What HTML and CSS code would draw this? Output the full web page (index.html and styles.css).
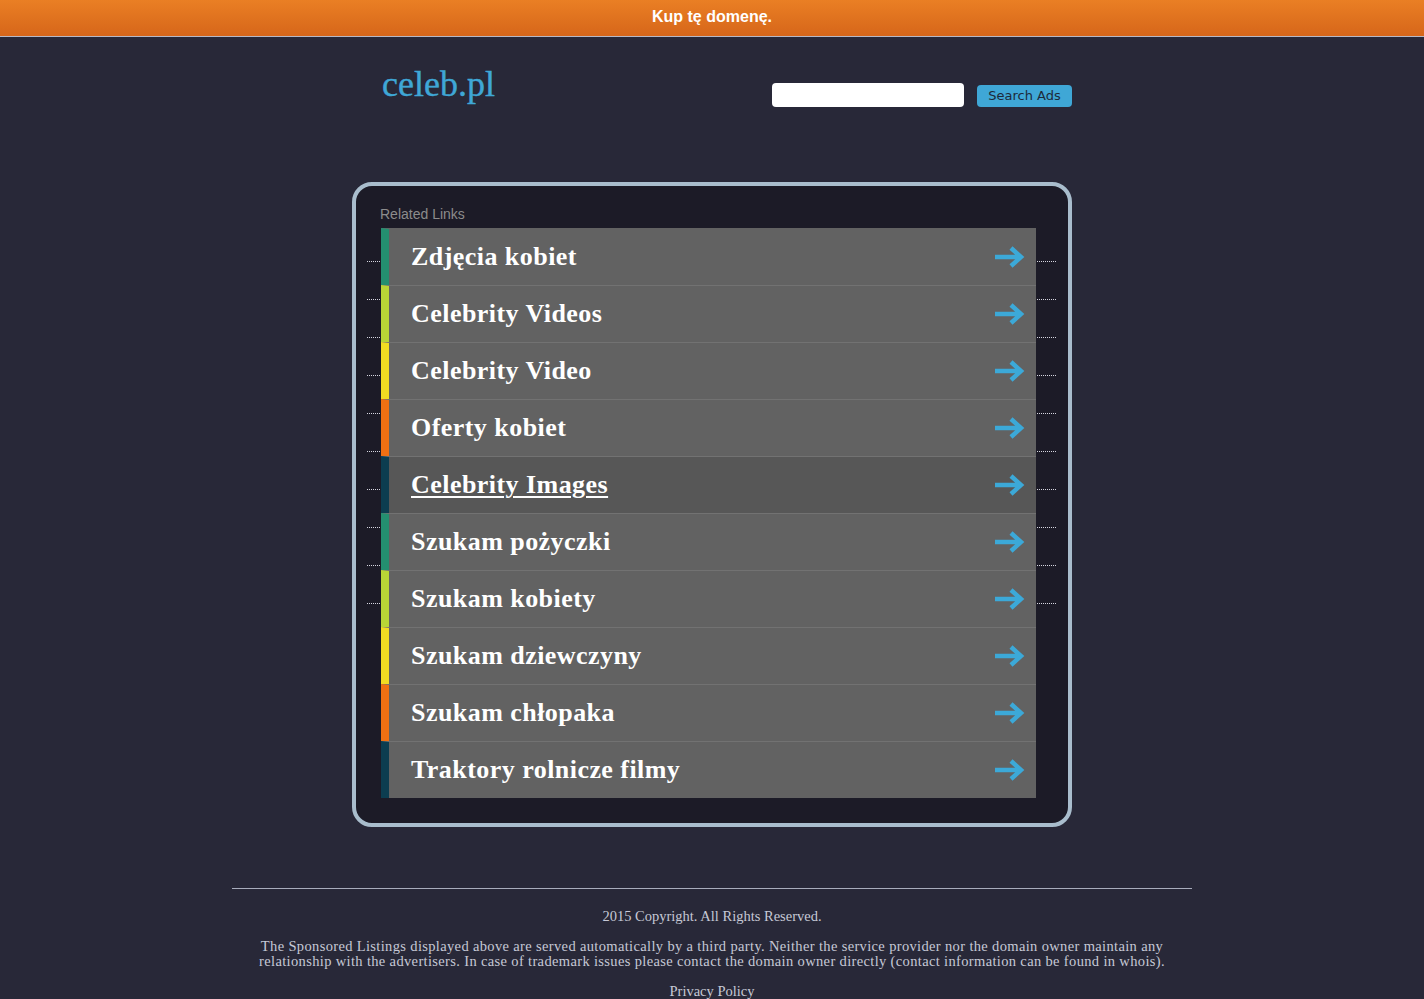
FILE: index.html
```html
<!DOCTYPE html>
<html lang="pl">
<head>
<meta charset="utf-8">
<title>celeb.pl</title>
<link rel="stylesheet" href="styles.css">
</head>
<body>
<div class="topbar"><a class="buy" href="#">Kup tę domenę.</a></div>

<div class="wrap">
  <header class="header">
    <div class="logo">celeb.pl</div>
    <form class="search">
      <input class="search-input" type="text">
      <button class="search-btn" type="button">Search Ads</button>
    </form>
  </header>

  <section class="box">
    <div class="box-title">Related Links</div>
    <div class="list-area">
      <div class="dots">
        <div class="dot-line"></div><div class="dot-line"></div><div class="dot-line"></div><div class="dot-line"></div><div class="dot-line"></div>
        <div class="dot-line"></div><div class="dot-line"></div><div class="dot-line"></div><div class="dot-line"></div><div class="dot-line"></div>
      </div>
      <ul class="links">
        <li class="link c1"><a href="#">Zdjęcia kobiet</a><svg class="arrow" viewBox="0 0 30 22"><path d="M0 11H26M16 2L26 11L16 20" /></svg></li>
        <li class="link c2"><a href="#">Celebrity Videos</a><svg class="arrow" viewBox="0 0 30 22"><path d="M0 11H26M16 2L26 11L16 20" /></svg></li>
        <li class="link c3"><a href="#">Celebrity Video</a><svg class="arrow" viewBox="0 0 30 22"><path d="M0 11H26M16 2L26 11L16 20" /></svg></li>
        <li class="link c4"><a href="#">Oferty kobiet</a><svg class="arrow" viewBox="0 0 30 22"><path d="M0 11H26M16 2L26 11L16 20" /></svg></li>
        <li class="link c5 hover"><a href="#">Celebrity Images</a><svg class="arrow" viewBox="0 0 30 22"><path d="M0 11H26M16 2L26 11L16 20" /></svg></li>
        <li class="link c1"><a href="#">Szukam pożyczki</a><svg class="arrow" viewBox="0 0 30 22"><path d="M0 11H26M16 2L26 11L16 20" /></svg></li>
        <li class="link c2"><a href="#">Szukam kobiety</a><svg class="arrow" viewBox="0 0 30 22"><path d="M0 11H26M16 2L26 11L16 20" /></svg></li>
        <li class="link c3"><a href="#">Szukam dziewczyny</a><svg class="arrow" viewBox="0 0 30 22"><path d="M0 11H26M16 2L26 11L16 20" /></svg></li>
        <li class="link c4"><a href="#">Szukam chłopaka</a><svg class="arrow" viewBox="0 0 30 22"><path d="M0 11H26M16 2L26 11L16 20" /></svg></li>
        <li class="link c5"><a href="#">Traktory rolnicze filmy</a><svg class="arrow" viewBox="0 0 30 22"><path d="M0 11H26M16 2L26 11L16 20" /></svg></li>
      </ul>
    </div>
  </section>
</div>

<footer class="footer">
  <p class="copy">2015 Copyright. All Rights Reserved.</p>
  <p class="disclaimer">The Sponsored Listings displayed above are served automatically by a third party. Neither the service provider nor the domain owner maintain any relationship with the advertisers. In case of trademark issues please contact the domain owner directly (contact information can be found in whois).</p>
  <p class="privacy"><a href="#">Privacy Policy</a></p>
</footer>
</body>
</html>
```
FILE: styles.css
```css
* { box-sizing: border-box; }
html, body { margin: 0; padding: 0; }
body {
  background: #282838;
  font-family: "Liberation Serif", "Times New Roman", serif;
  color: #c6c8d6;
}
.topbar {
  height: 37px;
  background: linear-gradient(#ea7f24, #d6661a);
  border-bottom: 1px solid #b9b9c4;
  display: flex;
  justify-content: center;
  align-items: center;
  padding-bottom: 3px;
}
.buy {
  font-family: "Liberation Sans", Arial, sans-serif;
  font-weight: bold;
  font-size: 16px;
  color: #fff;
  text-decoration: none;
}
.wrap {
  width: 720px;
  margin: 0 auto;
}
.header {
  display: flex;
  justify-content: space-between;
  align-items: flex-start;
  padding: 30px 0 0 30px;
  height: 145px;
}
.logo {
  font-size: 36px;
  color: #3fa7d6;
  font-weight: normal;
  line-height: 34px;
  -webkit-text-stroke: 0.4px #3fa7d6;
}
.search {
  display: flex;
  align-items: center;
  gap: 13px;
  margin-top: 16px;
  margin-right: 0;
}
.search-input {
  width: 192px;
  height: 24px;
  border: none;
  border-radius: 4px;
  background: #fff;
}
.search-btn {
  width: 95px;
  height: 22px;
  margin-top: 1px;
  border: none;
  border-radius: 4px;
  background: #3fa7d6;
  color: #1d2a3a;
  font-family: "DejaVu Sans", sans-serif;
  font-size: 13px;
  padding: 0;
}
.box {
  border: 4px solid #a9bdcd;
  border-radius: 20px;
  background: #1c1b27;
  padding: 20px 32px 25px 24px;
}
.box-title {
  font-family: "Liberation Sans", Arial, sans-serif;
  font-size: 14px;
  color: #8c8c8c;
  height: 22px;
  line-height: 16px;
}
.list-area {
  position: relative;
  margin-left: 1px;
}
.dots {
  position: absolute;
  top: 33px;
  left: -14px;
  right: -20px;
}
.dot-line {
  height: 38px;
  border-top: 1px dotted #d6d6e0;
}
.links {
  position: relative;
  list-style: none;
  margin: 0;
  padding: 0;
}
.link {
  height: 57px;
  background: #626262;
  border-left: 8px solid #2a9073;
  border-top: 1px solid #727272;
  display: flex;
  align-items: center;
  justify-content: space-between;
  padding: 0 11px 0 22px;
}
.link:first-child { border-top-color: #626262; }
.link.hover { background: #575757; }
.link a {
  font-size: 26px;
  font-weight: bold;
  color: #fff;
  text-decoration: none;
  letter-spacing: 0.45px;
}
.link.hover a { text-decoration: underline; text-underline-offset: 3px; text-decoration-thickness: 2px; }
.c1 { border-left-color: #248f70; }
.c2 { border-left-color: #b9d536; }
.c3 { border-left-color: #f2dc22; }
.c4 { border-left-color: #f07012; }
.c5 { border-left-color: #0c3d50; }
.arrow {
  width: 30px;
  height: 22px;
  fill: none;
  stroke: #3ca9d8;
  stroke-width: 4.5;
  stroke-linecap: butt;
  stroke-linejoin: miter;
}
.footer {
  width: 960px;
  margin: 61px auto 0;
  border-top: 1px solid #a8acbc;
  text-align: center;
  font-size: 14.5px;
  line-height: 15px;
  padding-top: 20px;
}
.footer p { margin: 0 0 15px; }
.footer .disclaimer { max-width: 950px; margin: 0 auto 15px; letter-spacing: 0.35px; }
.privacy a { color: #c6c8d6; text-decoration: none; }
```
